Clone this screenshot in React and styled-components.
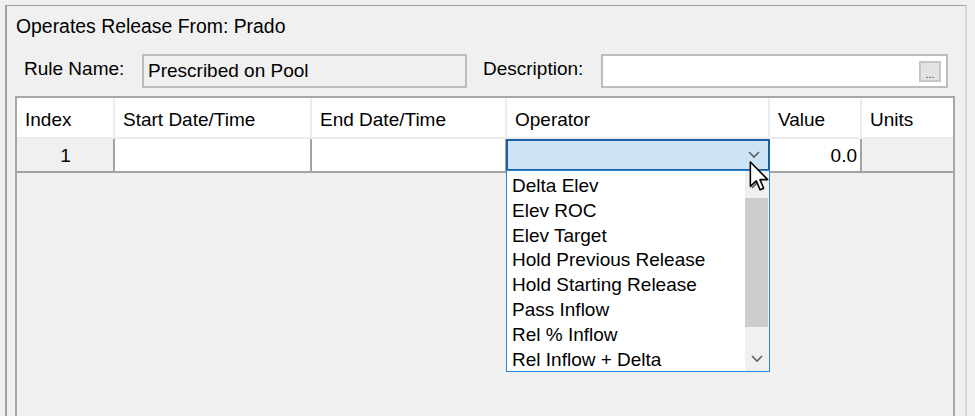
import React from "react";
import styled, { createGlobalStyle } from "styled-components";

const GlobalStyle = createGlobalStyle`
  body {
    margin: 0;
    background: #f0f0f0;
    font-family: "Liberation Sans", Arial, sans-serif;
    color: #000;
  }
  * { box-sizing: border-box; }
`;

const Frame = styled.div`
  position: relative;
  height: 416px;
  overflow: hidden;
  padding: 5px 8px 0 5px;
`;

const Panel = styled.div`
  height: 100%;
  display: flex;
  flex-direction: column;
  border-top: 1px solid #a0a0a0;
  border-left: 2px solid #a0a0a0;
  border-right: 2px solid #dadada;
  padding: 0 11px 0 8px;
  font-size: 19px;
`;

const Title = styled.div`
  height: 41px;
  display: flex;
  align-items: center;
  padding-left: 1px;
  font-size: 19.4px;
`;

const FieldRow = styled.div`
  display: flex;
  height: 34px;
  margin-top: 7px;
`;

const Label = styled.div`
  width: ${(p) => p.$w}px;
  margin-left: ${(p) => p.$ml || 0}px;
  line-height: 30px;
  white-space: nowrap;
`;

const TextBox = styled.div`
  position: relative;
  width: ${(p) => p.$w}px;
  height: 34px;
  border: 2px solid #bdbdbd;
  background: ${(p) => (p.$readOnly ? "#f0f0f0" : "#fff")};
  padding: 4px 0 0 4px;
  white-space: nowrap;
`;

const EllipsisButton = styled.div`
  position: absolute;
  right: 5px;
  top: 5px;
  width: 22px;
  height: 21px;
  border: 2px solid #c6c6c6;
  background: #e3e3e3;
  font-size: 11px;
  line-height: 22px;
  text-align: center;
  color: #333;
`;

const Table = styled.div`
  flex: 1;
  display: flex;
  flex-direction: column;
  margin-top: 8px;
  width: 940px;
  border: 2px solid #a7a7a7;
  border-bottom: none;
`;

const Row = styled.div`
  display: grid;
  grid-template-columns: 98px 197px 195px 263px 92px 1fr;
  height: ${(p) => p.$h}px;
  border-bottom: 2px solid ${(p) => (p.$header ? "#ececec" : "#a3a3a3")};
`;

const HeadCell = styled.div`
  background: #fff;
  border-right: 2px solid #ececec;
  padding: 5px 0 0 8px;
  display: flex;
  align-items: center;
  white-space: nowrap;
  &:last-child { border-right: none; }
`;

const Cell = styled.div`
  position: relative;
  background: ${(p) => (p.$gray ? "#f0f0f0" : "#fff")};
  border-right: ${(p) => (p.$noLine ? "none" : "2px solid #a3a3a3")};
  display: flex;
  align-items: center;
  justify-content: ${(p) => p.$align || "flex-start"};
  padding: 2px 3px 0 4px;
`;

const ComboCell = styled.div`
  position: relative;
  margin-left: -1px;
`;

const ComboBox = styled.div`
  height: 100%;
  border: 2px solid #1b5fa8;
  background: #cde4f7;
  display: flex;
  align-items: center;
  justify-content: flex-end;
  padding-right: 8px;
`;

const DropList = styled.div`
  position: absolute;
  top: 31px;
  left: 0;
  width: 264px;
  height: 202px;
  border: 1px solid #2b86d8;
  background: #fff;
  display: flex;
  z-index: 2;
  overflow: hidden;
`;

const Items = styled.div`
  flex: 1;
  padding-top: 3px;
`;

const Item = styled.div`
  height: 24.8px;
  line-height: 24.8px;
  padding-left: 5px;
  white-space: nowrap;
`;

const ScrollBar = styled.div`
  width: 24px;
  background: #f0f0f0;
  display: flex;
  flex-direction: column;
`;

const ScrollArrow = styled.div`
  height: ${(p) => p.$h}px;
  display: flex;
  align-items: center;
  justify-content: center;
`;

const Thumb = styled.div`
  height: 129px;
  margin-right: 1px;
  background: #cdcdcd;
`;

const Track = styled.div`
  flex: 1;
`;

const Body = styled.div`
  flex: 1;
  background: #f0f0f0;
`;

const Cursor = styled.svg`
  position: absolute;
  left: 749px;
  top: 161px;
  z-index: 5;
`;

const Chevron = ({ up, color = "#5f5f5f" }) => (
  <svg width="12" height="8" viewBox="0 0 12 8">
    <polyline
      points={up ? "1,7 6,2 11,7" : "1,1 6,6 11,1"}
      fill="none"
      stroke={color}
      strokeWidth="1.6"
    />
  </svg>
);

const operators = [
  "Delta Elev",
  "Elev ROC",
  "Elev Target",
  "Hold Previous Release",
  "Hold Starting Release",
  "Pass Inflow",
  "Rel % Inflow",
  "Rel Inflow + Delta",
];

export default function App() {
  return (
    <Frame>
      <GlobalStyle />
      <Panel>
        <Title>Operates Release From: Prado</Title>
        <FieldRow>
          <Label $w={118} $ml={9}>Rule Name:</Label>
          <TextBox $w={325} $readOnly>Prescribed on Pool</TextBox>
          <Label $w={118} $ml={16}>Description:</Label>
          <TextBox $w={347}>
            <EllipsisButton>...</EllipsisButton>
          </TextBox>
        </FieldRow>
        <Table>
          <Row $h={41} $header>
            <HeadCell>Index</HeadCell>
            <HeadCell>Start Date/Time</HeadCell>
            <HeadCell>End Date/Time</HeadCell>
            <HeadCell>Operator</HeadCell>
            <HeadCell>Value</HeadCell>
            <HeadCell>Units</HeadCell>
          </Row>
          <Row $h={34}>
            <Cell $gray $align="center">1</Cell>
            <Cell />
            <Cell />
            <ComboCell>
              <ComboBox>
                <Chevron />
              </ComboBox>
              <DropList>
                <Items>
                  {operators.map((op) => (
                    <Item key={op}>{op}</Item>
                  ))}
                </Items>
                <ScrollBar>
                  <ScrollArrow $h={27}>
                    <Chevron up color="#606060" />
                  </ScrollArrow>
                  <Thumb />
                  <Track />
                  <ScrollArrow $h={24}>
                    <Chevron color="#606060" />
                  </ScrollArrow>
                </ScrollBar>
              </DropList>
            </ComboCell>
            <Cell $align="flex-end">0.0</Cell>
            <Cell $gray $noLine />
          </Row>
          <Body />
        </Table>
      </Panel>
      <Cursor width="21" height="31" viewBox="0 0 13 20">
        <path
          d="M0.6 0.6 V16.4 L4.4 12.8 L6.9 18.6 L9.2 17.6 L6.8 12 L11.8 12 Z"
          fill="#fff"
          stroke="#000"
          strokeWidth="1"
          strokeLinejoin="round"
        />
      </Cursor>
    </Frame>
  );
}
